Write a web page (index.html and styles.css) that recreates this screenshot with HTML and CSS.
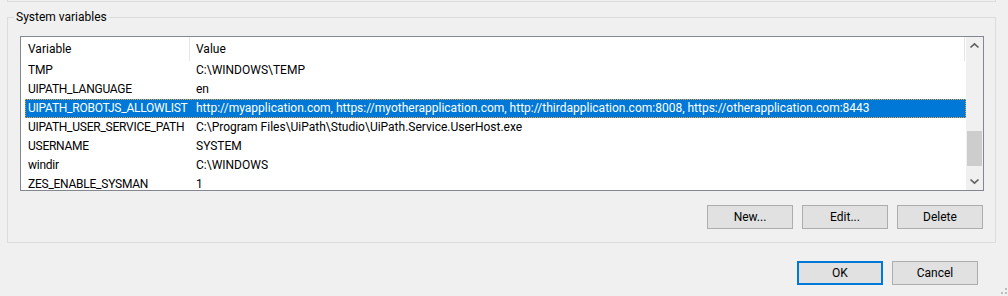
FILE: index.html
```html
<!DOCTYPE html>
<html lang="en">
<head>
  <meta charset="UTF-8" />
  <meta name="viewport" content="width=device-width, initial-scale=1.0"/>
  <title>Environment Variables</title>
  <link rel="stylesheet" href="styles.css">
</head>
<body>
  <div class="dialog">
    <div class="prev-group"></div>

    <fieldset class="group">
      <legend>System variables</legend>

      <div class="listview">
        <div class="list-main">
          <div class="list-header">
            <div class="col col-name">Variable</div>
            <div class="col col-value">Value</div>
          </div>
          <div class="row"><div class="col col-name">TMP</div><div class="col col-value">C:\WINDOWS\TEMP</div></div>
          <div class="row"><div class="col col-name">UIPATH_LANGUAGE</div><div class="col col-value">en</div></div>
          <div class="row selected"><div class="col col-name">UIPATH_ROBOTJS_ALLOWLIST</div><div class="col col-value">http://myapplication.com, https://myotherapplication.com, http://thirdapplication.com:8008, https://otherapplication.com:8443</div></div>
          <div class="row"><div class="col col-name">UIPATH_USER_SERVICE_PATH</div><div class="col col-value">C:\Program Files\UiPath\Studio\UiPath.Service.UserHost.exe</div></div>
          <div class="row"><div class="col col-name">USERNAME</div><div class="col col-value">SYSTEM</div></div>
          <div class="row"><div class="col col-name">windir</div><div class="col col-value">C:\WINDOWS</div></div>
          <div class="row"><div class="col col-name">ZES_ENABLE_SYSMAN</div><div class="col col-value">1</div></div>
        </div>

        <div class="vscroll">
          <div class="arrow">
            <svg width="17" height="17" viewBox="0 0 17 17"><polyline points="4.5,10.5 8.5,6.8 12.5,10.5" /></svg>
          </div>
          <div class="track"><div class="thumb"></div></div>
          <div class="arrow">
            <svg width="17" height="17" viewBox="0 0 17 17"><polyline points="4.5,6.5 8.5,10.2 12.5,6.5" /></svg>
          </div>
        </div>
      </div>

      <div class="button-row">
        <button>New...</button>
        <button>Edit...</button>
        <button>Delete</button>
      </div>
    </fieldset>

    <div class="dialog-buttons">
      <button class="default">OK</button>
      <button>Cancel</button>
    </div>

    <svg class="grip" width="12" height="12" viewBox="0 0 12 12">
      <rect x="9" y="1" width="2" height="2" />
      <rect x="5" y="5" width="2" height="2" />
      <rect x="9" y="5" width="2" height="2" />
      <rect x="1" y="9" width="2" height="2" />
      <rect x="5" y="9" width="2" height="2" />
      <rect x="9" y="9" width="2" height="2" />
    </svg>
  </div>
</body>
</html>
```

FILE: styles.css
```css
body {
  margin: 0;
  background: #f0f0f0;
  font-family: Roboto, "Liberation Sans", Arial, sans-serif;
  font-size: 12px;
  color: #000;
}
.dialog {
  position: relative;
  height: 296px;
  overflow: hidden;
}

/* bottom edge of the group above */
.prev-group {
  margin-left: 7px;
  width: 987px;
  height: 1px;
  border: 1px solid #dcdcdc;
  border-top: 0;
}

.group {
  margin: 8px 12px 0 7px;
  padding: 0 11px 13px 12px;
  min-width: 0;
  border: 1px solid #dcdcdc;
}
.group legend {
  margin-left: -6px;
  padding: 0 2px;
  line-height: 15px;
}

.listview {
  display: flex;
  height: 155px;
  box-sizing: border-box;
  margin-top: 11px;
  border: 1px solid #828790;
  background: #fff;
}
.list-main {
  flex: 1;
  min-width: 0;
  overflow: hidden;
}
.list-header {
  display: flex;
  height: 24px;
  line-height: 24px;
}
.list-header .col-name {
  width: 161px;
  padding-left: 7px;
}
.list-header .col-value {
  flex: 1;
  padding-left: 6px;
  border-left: 1px solid #e5e5e5;
  border-right: 1px solid #e5e5e5;
  margin-right: 1px;
}
.col {
  white-space: nowrap;
  overflow: hidden;
}

.row {
  display: flex;
  height: 19px;
  box-sizing: border-box;
  margin-left: 4px;
  line-height: 17px;
  border: 1px solid transparent;
}
.row .col-name {
  width: 161px;
  padding-left: 2px;
  letter-spacing: -0.25px;
}
.row .col-value {
  flex: 1;
  padding-left: 7px;
}
.row.selected {
  background: #0078d7;
  color: #fff;
  border: 1px dotted #f0a53c;
}

.vscroll {
  width: 17px;
  display: flex;
  flex-direction: column;
  background: #f0f0f0;
}
.arrow {
  height: 17px;
}
.arrow svg {
  display: block;
}
.arrow polyline {
  fill: none;
  stroke: #606060;
  stroke-width: 1.7;
}
.track {
  flex: 1;
}
.thumb {
  margin: 77px 1px 0;
  height: 35px;
  background: #cdcdcd;
}

button {
  width: 86px;
  height: 24px;
  box-sizing: border-box;
  padding: 0;
  font: inherit;
  color: #000;
  background: #e1e1e1;
  border: 1px solid #adadad;
}
.button-row {
  display: flex;
  justify-content: flex-end;
  gap: 9px;
  margin: 14px 1px 0 0;
}
.dialog-buttons {
  display: flex;
  justify-content: flex-end;
  gap: 9px;
  margin-top: 18px;
  padding-right: 30px;
}
button.default {
  border: 2px solid #0078d7;
}

.grip {
  position: absolute;
  right: 0;
  bottom: -3px;
  fill: #bcbcbc;
}
```
